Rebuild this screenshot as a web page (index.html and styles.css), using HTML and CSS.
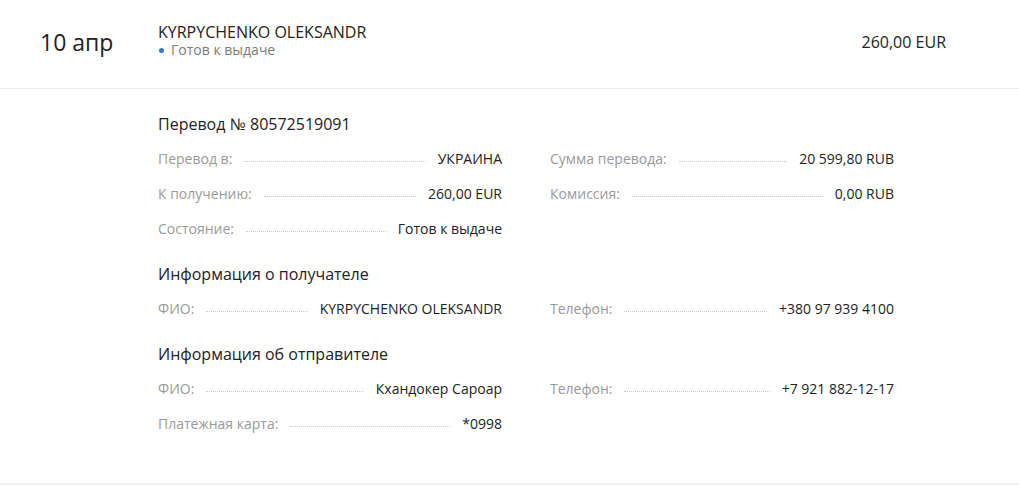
FILE: index.html
```html
<!DOCTYPE html>
<html lang="ru">
<head>
<meta charset="utf-8">
<link rel="stylesheet" href="styles.css">
</head>
<body>
<div class="item">
  <div class="head">
    <div class="date">10 апр</div>
    <div class="who">
      <div class="name">KYRPYCHENKO OLEKSANDR</div>
      <div class="status"><span class="dot"></span>Готов к выдаче</div>
    </div>
    <div class="amount">260,00 EUR</div>
  </div>
  <div class="details">
    <div class="section">
      <div class="title">Перевод № 80572519091</div>
      <div class="grid">
        <div class="col">
          <div class="row"><span class="label">Перевод в:</span><span class="leader"></span><span class="value">УКРАИНА</span></div>
          <div class="row"><span class="label">К получению:</span><span class="leader"></span><span class="value">260,00 EUR</span></div>
          <div class="row"><span class="label">Состояние:</span><span class="leader"></span><span class="value">Готов к выдаче</span></div>
        </div>
        <div class="col">
          <div class="row"><span class="label">Сумма перевода:</span><span class="leader"></span><span class="value">20 599,80 RUB</span></div>
          <div class="row"><span class="label">Комиссия:</span><span class="leader"></span><span class="value">0,00 RUB</span></div>
        </div>
      </div>
    </div>
    <div class="section">
      <div class="title">Информация о получателе</div>
      <div class="grid">
        <div class="col">
          <div class="row"><span class="label">ФИО:</span><span class="leader"></span><span class="value">KYRPYCHENKO OLEKSANDR</span></div>
        </div>
        <div class="col">
          <div class="row"><span class="label">Телефон:</span><span class="leader"></span><span class="value">+380 97 939 4100</span></div>
        </div>
      </div>
    </div>
    <div class="section">
      <div class="title">Информация об отправителе</div>
      <div class="grid">
        <div class="col">
          <div class="row"><span class="label">ФИО:</span><span class="leader"></span><span class="value">Кхандокер Сароар</span></div>
          <div class="row"><span class="label">Платежная карта:</span><span class="leader"></span><span class="value">*0998</span></div>
        </div>
        <div class="col">
          <div class="row"><span class="label">Телефон:</span><span class="leader"></span><span class="value">+7 921 882-12-17</span></div>
        </div>
      </div>
    </div>
  </div>
</div>
</body>
</html>
```
FILE: styles.css
```css
html, body {
  margin: 0;
  padding: 0;
  background: #ffffff;
}
body {
  font-family: "Open Sans", "Liberation Sans", sans-serif;
  color: #222222;
  width: 1019px;
}
.item {
  border-bottom: 2px solid #efefef;
}
.head {
  height: 84px;
  padding-bottom: 4px;
  display: flex;
  align-items: center;
  border-bottom: 1px solid #ececec;
  padding-left: 40px;
  padding-right: 73px;
}
.date {
  width: 118px;
  font-size: 23px;
  line-height: 30px;
  color: #222;
}
.who {
  flex: 1;
  margin-bottom: 2px;
}
.name {
  font-size: 16px;
  line-height: 17px;
  color: #222;
}
.status {
  display: flex;
  align-items: center;
  font-size: 14px;
  line-height: 17px;
  color: #7a7a7a;
}
.dot {
  width: 5px;
  height: 5px;
  border-radius: 50%;
  background: #2f74e0;
  margin: 1px 7px 0 1px;
}
.amount {
  font-size: 16px;
  line-height: 20px;
  color: #222;
}
.details {
  padding: 25px 0 42px 158px;
}
.section + .section {
  margin-top: 18px;
}
.title {
  font-size: 16px;
  line-height: 20px;
  margin-bottom: 7px;
  color: #222;
}
.grid {
  display: grid;
  grid-template-columns: 344px 344px;
  column-gap: 48px;
}
.row {
  height: 35px;
  display: flex;
  align-items: center;
  font-size: 14px;
  line-height: 18px;
}
.label {
  color: #999999;
}
.leader {
  flex: 1;
  margin: 5px 12px 0;
  border-bottom: 1px dotted #c9c9c9;
  align-self: center;
}
.value {
  color: #222;
}
```
